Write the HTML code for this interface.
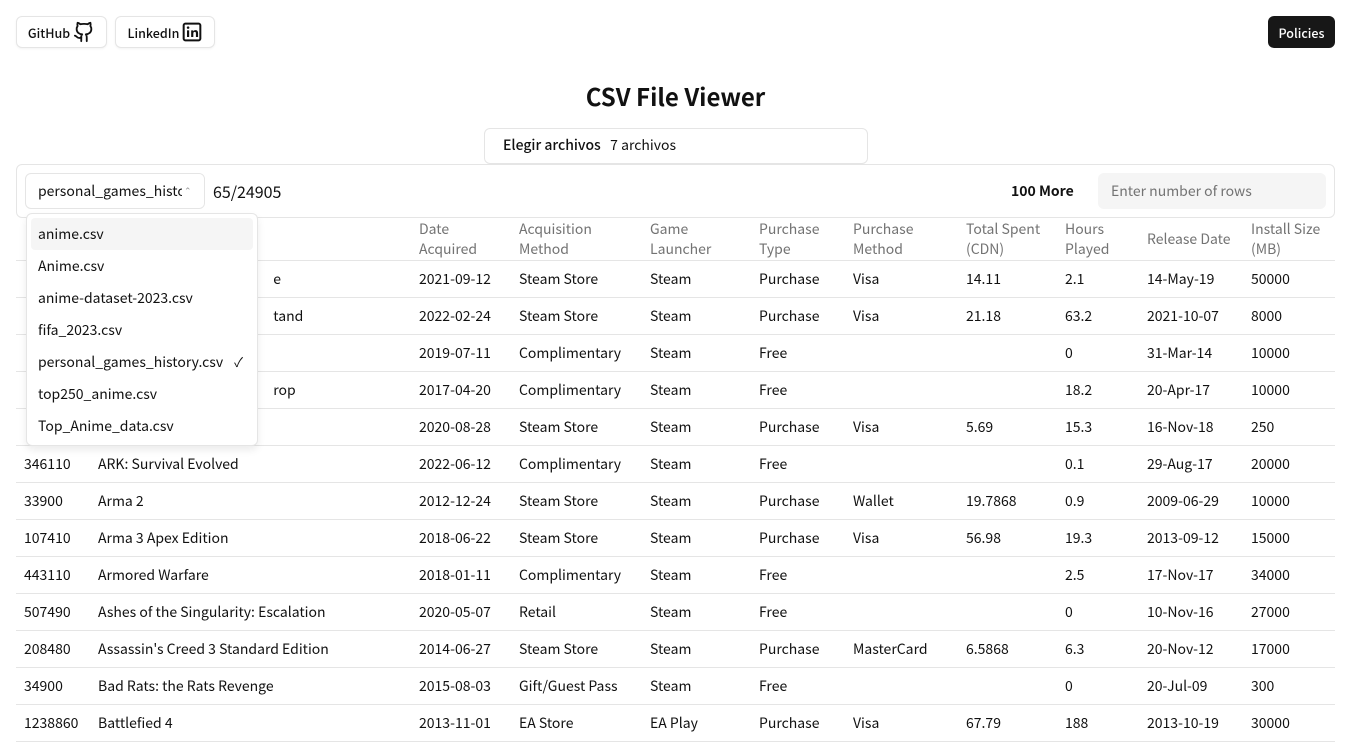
<!DOCTYPE html>
<html><head><meta charset="utf-8">
<style>
*{box-sizing:border-box;margin:0;padding:0}
body{width:1366px;height:736px;overflow:hidden;background:#fff;font-family:"Noto Sans CJK JP","Liberation Sans",sans-serif;color:#111;position:relative;font-size:14px}
.btn{position:absolute;top:16px;height:32px;border:1px solid #e5e5e5;border-radius:6px;background:#fff;font-size:12.5px;font-weight:500;display:flex;align-items:center;justify-content:center;gap:3px;box-shadow:0 1px 2px rgba(0,0,0,.05)}
.pol{position:absolute;left:1268px;top:16px;width:67px;height:32px;background:#171717;color:#fff;border-radius:6px;font-size:12.5px;font-weight:500;display:flex;align-items:center;justify-content:center}
h1{position:absolute;left:0;width:1351px;top:80px;text-align:center;font-size:24px;font-weight:700;line-height:32px}
.file{position:absolute;left:484px;top:128px;width:384px;height:36px;border:1px solid #e5e5e5;border-radius:6px;font-size:14px;line-height:32px;padding-left:18px}
.bar{position:absolute;left:16px;top:164px;width:1319px;height:54px;border:1px solid #e5e5e5;border-radius:6px}
.sel{position:absolute;left:25px;top:173px;width:180px;height:36px;border:1px solid #e5e5e5;border-radius:6px;font-size:14px;line-height:34px;padding-left:12px;overflow:hidden;white-space:nowrap}
.sel span{position:absolute;right:0;top:0;width:22px;height:34px;background:#fff;color:#999;font-size:9px;text-align:left;padding-left:2px}
.count{position:absolute;left:213px;top:180px;font-size:16px;line-height:22px}
.more{position:absolute;left:1011px;top:181px;font-size:14px;font-weight:600;line-height:20px}
.inp{position:absolute;left:1098px;top:173px;width:228px;height:36px;background:#f5f5f5;border-radius:6px;color:#737373;font-size:14px;line-height:36px;padding-left:13px}
table{position:absolute;left:16px;top:218px;width:1319px;border-collapse:collapse;font-size:14px}
th{font-weight:400;color:#737373;text-align:left;height:42px;line-height:20px;vertical-align:middle;border-bottom:1px solid #e5e5e5;padding:0 8px}
td{height:37px;border-bottom:1px solid #e5e5e5;padding:0 8px;white-space:nowrap;line-height:20px}
.h{color:transparent}
.dd{position:absolute;left:26px;top:213px;width:232px;height:233px;background:#fff;border:1px solid #e5e5e5;border-radius:6px;box-shadow:0 4px 8px rgba(0,0,0,.08);padding:4px}
.dd div{height:32px;line-height:32px;padding-left:7px;font-size:14px;border-radius:4px;position:relative}
.dd .hi{background:#f5f5f5}
.chk{position:absolute;right:10px;top:0;font-size:13px}
</style></head><body>
<div class="btn" style="left:16px;width:91px">GitHub
<svg width="22" height="22" viewBox="0 0 24 24" fill="none" stroke="#111" stroke-width="2" stroke-linecap="round" stroke-linejoin="round"><path d="M15 22v-4a4.8 4.8 0 0 0-1-3.5c3 0 6-2 6-5.5.08-1.25-.27-2.480-1-3.5.28-1.15.28-2.35 0-3.5 0 0-1 0-3 1.5-2.64-.5-5.36-.5-8 0C6 2 5 2 5 2c-.3 1.15-.3 2.35 0 3.5A5.4 5.4 0 0 0 4 9c0 3.5 3 5.5 6 5.5-.39.49-.68 1.05-.85 1.65-.17.6-.22 1.230-.15 1.85v4"/><path d="M9 18c-4.51 2-5-2-7-2"/></svg></div>
<div class="btn" style="left:115px;width:100px">LinkedIn
<svg width="20" height="20" viewBox="0 0 24 24"><rect x="2" y="2" width="20" height="20" rx="2" fill="none" stroke="#111" stroke-width="2.4"/><rect x="6" y="10" width="2.6" height="8" fill="#111"/><circle cx="7.3" cy="6.8" r="1.5" fill="#111"/><path d="M11 10h2.5v1.3c.6-1 1.6-1.5 2.8-1.5 2 0 3 1.3 3 3.6V18h-2.6v-4.2c0-1.2-.4-1.9-1.4-1.9s-1.7.7-1.7 1.9V18H11z" fill="#111"/></svg></div>
<div class="pol">Policies</div>
<h1>CSV File Viewer</h1>
<div class="file"><span style="font-weight:500">Elegir archivos</span>&nbsp;&nbsp; 7 archivos</div>
<div class="bar"></div>
<div class="sel">personal_games_history.csv<span>⌃<br></span></div>
<div class="count">65/24905</div>
<div class="more">100 More</div>
<div class="inp">Enter number of rows</div>
<table>
<colgroup><col style="width:74px"><col style="width:321px"><col style="width:100px"><col style="width:131px"><col style="width:109px"><col style="width:94px"><col style="width:113px"><col style="width:99px"><col style="width:82px"><col style="width:104px"><col></colgroup>
<tr><th class="h">Steam ID</th><th class="h">Game</th><th>Date<br>Acquired</th><th>Acquisition<br>Method</th><th>Game<br>Launcher</th><th>Purchase<br>Type</th><th>Purchase<br>Method</th><th>Total Spent<br>(CDN)</th><th>Hours<br>Played</th><th>Release Date</th><th>Install Size<br>(MB)</th></tr>
<tr><td class="h">1</td><td><span class="h">——————————————— </span>e</td><td>2021-09-12</td><td>Steam Store</td><td>Steam</td><td>Purchase</td><td>Visa</td><td>14.11</td><td>2.1</td><td>14-May-19</td><td>50000</td></tr>
<tr><td class="h">2</td><td><span class="h">——————————————— </span>tand</td><td>2022-02-24</td><td>Steam Store</td><td>Steam</td><td>Purchase</td><td>Visa</td><td>21.18</td><td>63.2</td><td>2021-10-07</td><td>8000</td></tr>
<tr><td class="h">3</td><td></td><td>2019-07-11</td><td>Complimentary</td><td>Steam</td><td>Free</td><td></td><td></td><td>0</td><td>31-Mar-14</td><td>10000</td></tr>
<tr><td class="h">4</td><td><span class="h">——————————————— </span>rop</td><td>2017-04-20</td><td>Complimentary</td><td>Steam</td><td>Free</td><td></td><td></td><td>18.2</td><td>20-Apr-17</td><td>10000</td></tr>
<tr><td class="h">5</td><td></td><td>2020-08-28</td><td>Steam Store</td><td>Steam</td><td>Purchase</td><td>Visa</td><td>5.69</td><td>15.3</td><td>16-Nov-18</td><td>250</td></tr>
<tr><td>346110</td><td>ARK: Survival Evolved</td><td>2022-06-12</td><td>Complimentary</td><td>Steam</td><td>Free</td><td></td><td></td><td>0.1</td><td>29-Aug-17</td><td>20000</td></tr>
<tr><td>33900</td><td>Arma 2</td><td>2012-12-24</td><td>Steam Store</td><td>Steam</td><td>Purchase</td><td>Wallet</td><td>19.7868</td><td>0.9</td><td>2009-06-29</td><td>10000</td></tr>
<tr><td>107410</td><td>Arma 3 Apex Edition</td><td>2018-06-22</td><td>Steam Store</td><td>Steam</td><td>Purchase</td><td>Visa</td><td>56.98</td><td>19.3</td><td>2013-09-12</td><td>15000</td></tr>
<tr><td>443110</td><td>Armored Warfare</td><td>2018-01-11</td><td>Complimentary</td><td>Steam</td><td>Free</td><td></td><td></td><td>2.5</td><td>17-Nov-17</td><td>34000</td></tr>
<tr><td>507490</td><td>Ashes of the Singularity: Escalation</td><td>2020-05-07</td><td>Retail</td><td>Steam</td><td>Free</td><td></td><td></td><td>0</td><td>10-Nov-16</td><td>27000</td></tr>
<tr><td>208480</td><td>Assassin's Creed 3 Standard Edition</td><td>2014-06-27</td><td>Steam Store</td><td>Steam</td><td>Purchase</td><td>MasterCard</td><td>6.5868</td><td>6.3</td><td>20-Nov-12</td><td>17000</td></tr>
<tr><td>34900</td><td>Bad Rats: the Rats Revenge</td><td>2015-08-03</td><td>Gift/Guest Pass</td><td>Steam</td><td>Free</td><td></td><td></td><td>0</td><td>20-Jul-09</td><td>300</td></tr>
<tr><td>1238860</td><td>Battlefied 4</td><td>2013-11-01</td><td>EA Store</td><td>EA Play</td><td>Purchase</td><td>Visa</td><td>67.79</td><td>188</td><td>2013-10-19</td><td>30000</td></tr>
</table>
<div class="dd">
<div class="hi">anime.csv</div>
<div>Anime.csv</div>
<div>anime-dataset-2023.csv</div>
<div>fifa_2023.csv</div>
<div>personal_games_history.csv<span class="chk">✓</span></div>
<div>top250_anime.csv</div>
<div>Top_Anime_data.csv</div>
</div>
</body></html>
